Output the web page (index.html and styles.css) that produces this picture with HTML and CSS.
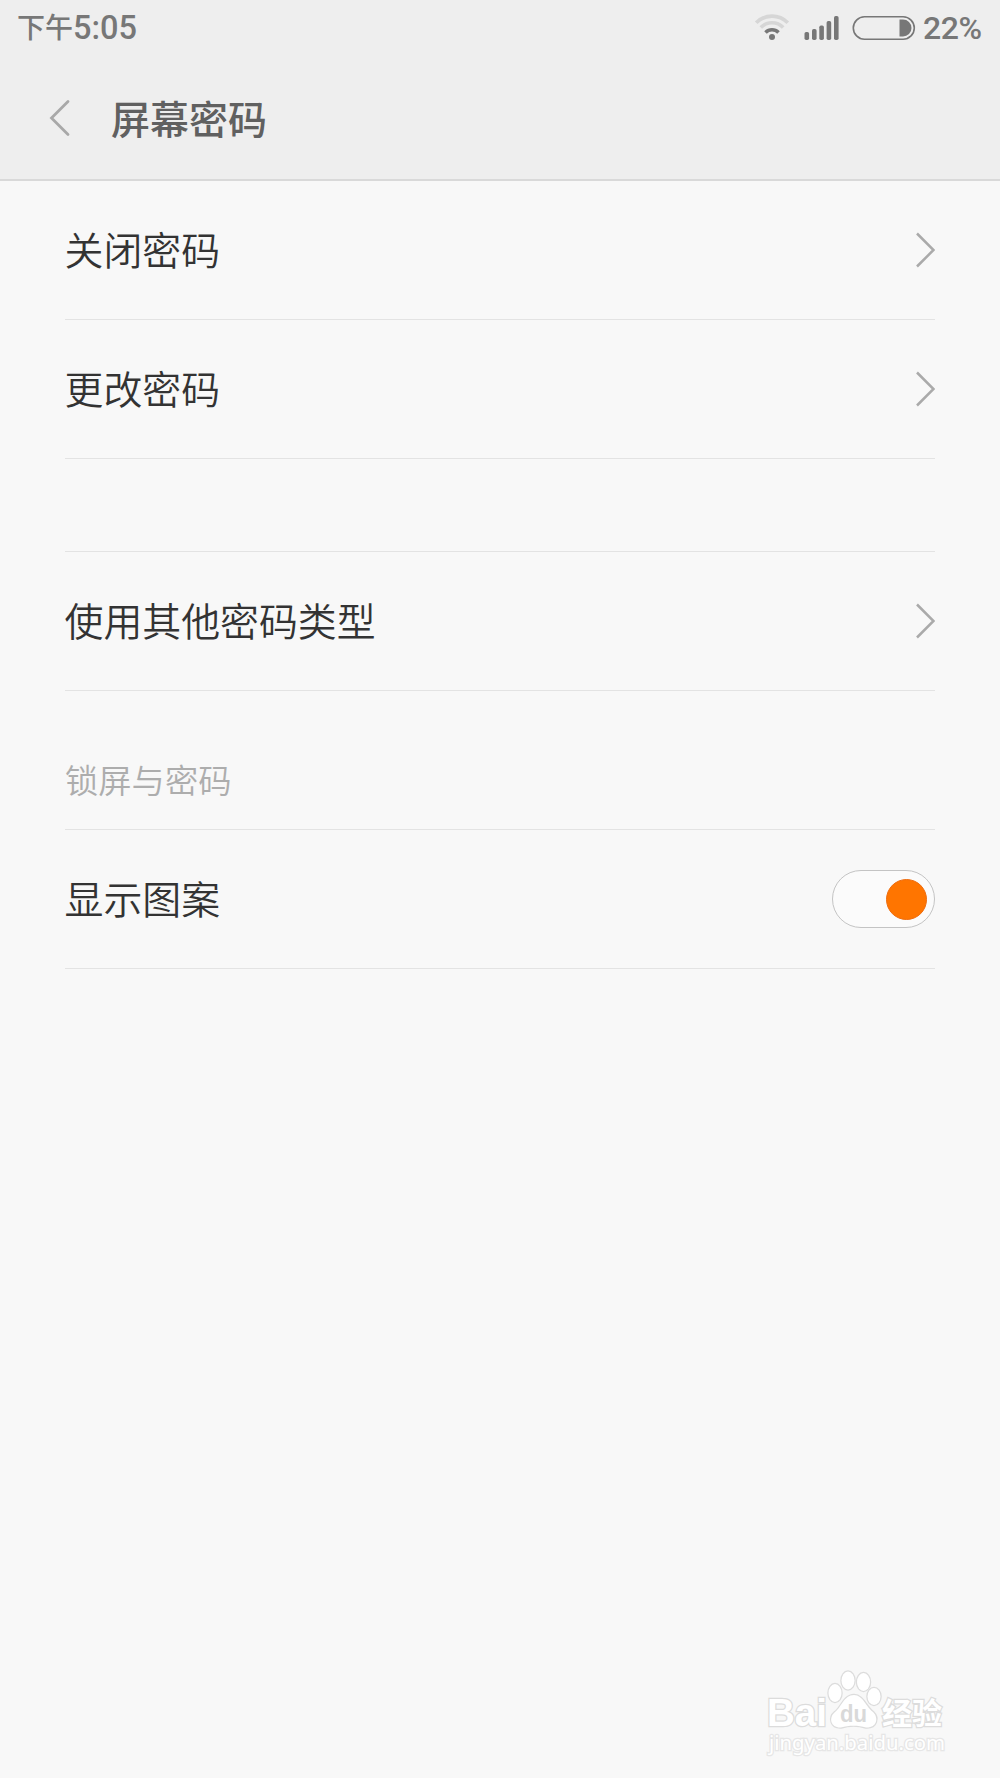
FILE: index.html
```html
<!DOCTYPE html>
<html lang="zh-CN">
<head>
<meta charset="utf-8">
<title>屏幕密码</title>
<link rel="stylesheet" href="styles.css">
</head>
<body>
<div class="screen">
  <header class="header">
    <div class="status">
      <div class="time"><span class="time-cn">下午</span><span class="digits">5:05</span></div>
      <div class="indicators">
        <svg class="wifi" width="36" height="28" viewBox="0 0 36 28" fill="none">
          <path d="M2.2 8.800A22 22 0 0 1 33.8 8.800" stroke="#d6d6d6" stroke-width="3.6"/>
          <path d="M6.8 13.600A15.5 15.5 0 0 1 29.2 13.600" stroke="#d6d6d6" stroke-width="3.6"/>
          <path d="M11.5 18.500A9.2 9.2 0 0 1 24.5 18.500" stroke="#777" stroke-width="3.6"/>
          <circle cx="18" cy="23" r="3" fill="#777"/>
        </svg>
        <svg class="signal" width="36" height="26" viewBox="0 0 36 26" fill="#777">
          <rect x="0.5" y="17" width="4.6" height="8" rx="1.7"/>
          <rect x="8" y="14" width="4.6" height="11" rx="1.7"/>
          <rect x="15.3" y="10.5" width="4.6" height="14.5" rx="1.7"/>
          <rect x="22.6" y="6" width="4.6" height="19" rx="1.7"/>
          <rect x="30" y="1" width="4.6" height="24" rx="1.7"/>
        </svg>
        <svg class="battery" width="64" height="26" viewBox="0 0 64 26">
          <rect x="1.3" y="1.8" width="61" height="22.4" rx="11.2" fill="none" stroke="#777" stroke-width="1.6"/>
          <path d="M47.5 4.5h3.5a8.5 8.5 0 0 1 0 17h-3.500z" fill="#777"/>
        </svg>
        <span class="digits percent">22%</span>
      </div>
    </div>
    <div class="titlebar">
      <svg class="back" width="22" height="38" viewBox="0 0 22 38"><path d="M19 2.500 2.500 19 19 35.500" fill="none" stroke="#a8a8a8" stroke-width="2.800" stroke-linecap="round"/></svg>
      <h1 class="title">屏幕密码</h1>
    </div>
  </header>
  <main class="list">
    <div class="row"><span class="label">关闭密码</span><svg class="arrow" width="20" height="36" viewBox="0 0 20 36"><path d="M2 1.500 18.500 18 2 34.500" /></svg></div>
    <div class="row"><span class="label">更改密码</span><svg class="arrow" width="20" height="36" viewBox="0 0 20 36"><path d="M2 1.500 18.500 18 2 34.500" /></svg></div>
    <div class="spacer"></div>
    <div class="row"><span class="label">使用其他密码类型</span><svg class="arrow" width="20" height="36" viewBox="0 0 20 36"><path d="M2 1.500 18.500 18 2 34.500" /></svg></div>
    <h2 class="section">锁屏与密码</h2>
    <div class="row"><span class="label">显示图案</span><div class="toggle"><div class="knob"></div></div></div>
  </main>
  <footer class="footer">
    <svg class="watermark" width="190" height="96" viewBox="0 0 190 96">
      <g class="brand">
        <text x="5" y="56" font-size="38" textLength="60" lengthAdjust="spacingAndGlyphs">Bai</text>
        <text class="cn" x="120" y="54" font-size="30" textLength="60">经验</text>
      </g>
      <g class="paw">
        <ellipse cx="73" cy="23" rx="6.500" ry="9"/>
        <ellipse cx="86" cy="10.500" rx="6.500" ry="9"/>
        <ellipse cx="101.500" cy="12" rx="6.500" ry="9"/>
        <ellipse cx="112" cy="26.500" rx="6.500" ry="8.500"/>
        <path d="M92 25C82 25 79 38 73 42C66 48 69 58 79 57.500C87 55 96 55 104 57.500C115 58 117 48 111 42C104 37 101 25 92 25Z"/>
      </g>
      <text class="du" x="78" y="52" font-size="24" textLength="27" lengthAdjust="spacingAndGlyphs">du</text>
      <text class="url" x="7" y="80" font-size="20" textLength="176" lengthAdjust="spacingAndGlyphs">jingyan.baidu.com</text>
    </svg>
  </footer>
</div>
</body>
</html>
```
FILE: styles.css
```css
* { box-sizing: border-box; }
body {
  margin: 0;
  background: #f8f8f8;
  color: #333;
  font-family: "Noto Sans CJK SC", sans-serif;
}
.screen {
  width: 1000px;
  height: 1778px;
  display: flex;
  flex-direction: column;
  overflow: hidden;
}
.header {
  height: 181px;
  background: #eee;
  border-bottom: 2px solid #d9d9d9;
}
.status {
  height: 56px;
  padding: 0 17px;
  display: flex;
  justify-content: space-between;
  align-items: center;
  color: #777;
}
.time { display: flex; align-items: center; }
.time-cn { font-size: 28px; font-weight: 500; line-height: 52px; padding-bottom: 4px; }
.digits { font-family: Roboto, sans-serif; font-size: 32.500px; font-weight: 500; line-height: 56px; }
.indicators { display: flex; align-items: center; }
.signal { margin-left: 14px; }
.battery { margin-left: 12px; }
.percent { width: 60px; margin-left: 7px; font-size: 32px; letter-spacing: -0.400px; }
.titlebar {
  height: 123px;
  padding: 2px 0 0 49px;
  display: flex;
  align-items: center;
}
.back { margin-bottom: 1px; }
.title {
  margin: 0 0 0 40px;
  padding-bottom: 4px;
  font-size: 39px;
  font-weight: 500;
  line-height: 60px;
  color: #606060;
}
.list {
  flex: 1;
  padding: 0 65px;
}
.row {
  height: 139px;
  display: flex;
  align-items: center;
  justify-content: space-between;
  font-size: 38.900px;
  font-weight: 350;
  border-bottom: 1px solid #e3e3e3;
}
.label { padding-bottom: 4px; margin-left: -0.500px; }
.arrow { fill: none; stroke: #aaa; stroke-width: 2.500; }
.spacer { height: 93px; border-bottom: 1px solid #e3e3e3; }
.section {
  margin: 0;
  height: 139px;
  padding-top: 63px;
  font-size: 33.300px;
  line-height: 50px;
  font-weight: 350;
  color: #adadad;
  border-bottom: 1px solid #e3e3e3;
}
.toggle {
  width: 103px;
  height: 58px;
  padding-right: 7px;
  display: flex;
  align-items: center;
  justify-content: flex-end;
  border: 1px solid #c4c4c4;
  border-radius: 29px;
  background: #fbfbfb;
}
.knob {
  width: 41px;
  height: 41px;
  border-radius: 50%;
  background: #ff7500;
  border: 1px solid #ee6d10;
}
.footer {
  height: 108px;
  padding-left: 762px;
}
.watermark { display: block; }
.brand, .paw, .url {
  fill: #fff;
  stroke: #dcdcdc;
  stroke-width: 2.500;
  paint-order: stroke;
}
.brand, .du, .url { font-family: "Liberation Sans", sans-serif; font-weight: 700; }
.brand .cn { font-family: "Noto Sans CJK SC", sans-serif; }
.du { fill: #d9d9d9; }
.url { font-family: "Noto Sans", sans-serif; font-weight: 400; stroke: #e6e6e6; }
```
